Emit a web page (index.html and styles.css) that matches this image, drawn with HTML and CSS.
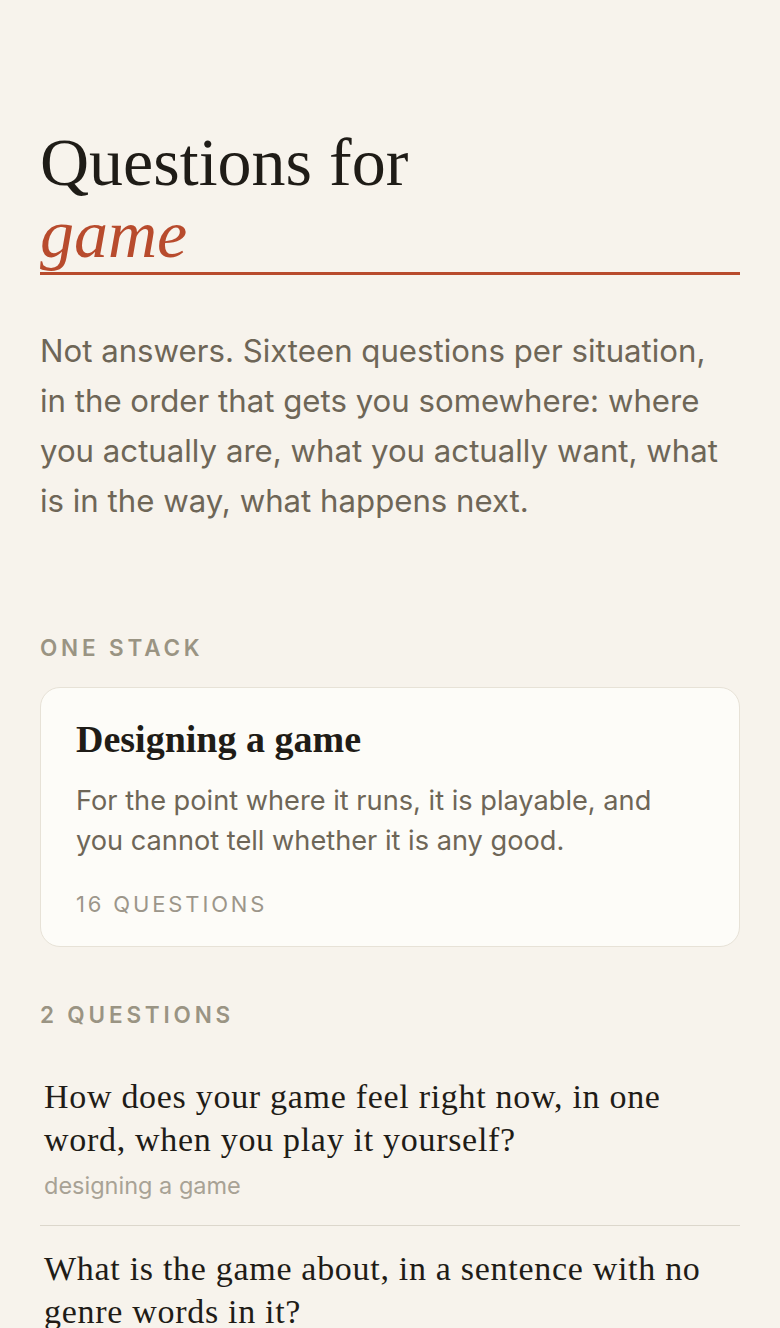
FILE: index.html
```html
<!DOCTYPE html>
<html lang="en">
<head>
<meta charset="utf-8">
<title>Questions for game</title>
<link rel="stylesheet" href="styles.css">
</head>
<body>
<main class="page">
  <h1 class="title">Questions for<br><em class="accent">game</em></h1>
  <p class="intro">Not answers. Sixteen questions per situation, in the order that gets you somewhere: where you actually are, what you actually want, what is in the way, what happens next.</p>

  <h2 class="label label-stack">One stack</h2>
  <a class="card" href="#">
    <h3 class="card-title">Designing a game</h3>
    <p class="card-desc">For the point where it runs, it is playable, and you cannot tell whether it is any good.</p>
    <div class="card-count">16 questions</div>
  </a>

  <h2 class="label label-list">2 questions</h2>
  <ul class="qlist">
    <li class="qitem">
      <p class="qtext">How does your game feel right now, in one word, when you play it yourself?</p>
      <p class="qsrc">designing a game</p>
    </li>
    <li class="qitem">
      <p class="qtext">What is the game about, in a sentence with no genre words in it?</p>
      <p class="qsrc">designing a game</p>
    </li>
  </ul>
</main>
</body>
</html>
```

FILE: styles.css
```css
html, body {
  margin: 0;
  padding: 0;
  background: #f7f3ec;
}
body {
  font-family: Inter, "Noto Sans", sans-serif;
  color: #1f1c17;
}
.page {
  padding: 126px 40px 40px;
}
.title {
  margin: 0;
  font-family: "Liberation Serif", serif;
  font-weight: 400;
  font-size: 68px;
  line-height: 72px;
  color: #1f1c17;
  padding-bottom: 2px;
  border-bottom: 3px solid #b84b2d;
}
.accent {
  font-style: italic;
  color: #b84b2d;
}
.intro {
  margin: 51px 0 0;
  font-size: 31.2px;
  line-height: 50px;
  color: #6e6657;
}
.label {
  margin: 0;
  font-size: 22.5px;
  line-height: 26px;
  font-weight: 600;
  letter-spacing: 0.17em;
  text-transform: uppercase;
  color: #9a9483;
}
.label-stack {
  margin-top: 109px;
}
.card {
  display: block;
  margin-top: 26px;
  padding: 28px 35px 29px;
  background: #fdfcf8;
  border: 1px solid #e7e2d7;
  border-radius: 20px;
  text-decoration: none;
  color: inherit;
}
.card-title {
  margin: 0;
  font-family: "Liberation Serif", serif;
  font-weight: 700;
  font-size: 38px;
  line-height: 46px;
  color: #1f1c17;
}
.card-desc {
  margin: 19px 0 0;
  font-size: 27.2px;
  line-height: 40px;
  color: #6e6657;
}
.card-count {
  margin-top: 30px;
  font-size: 22px;
  line-height: 26px;
  letter-spacing: 0.13em;
  text-transform: uppercase;
  color: #9c968a;
}
.label-list {
  margin-top: 55px;
}
.qlist {
  list-style: none;
  margin: 47px 0 0;
  padding: 0;
}
.qitem {
  padding: 0 4px 25px;
  border-bottom: 1px solid #dcd7cc;
}
.qitem + .qitem {
  padding-top: 21px;
}
.qtext {
  margin: 0;
  font-family: "Liberation Serif", serif;
  font-size: 34px;
  line-height: 43px;
  letter-spacing: 0.7px;
  color: #1f1c17;
}
.qsrc {
  margin: 11px 0 0;
  font-size: 23.5px;
  line-height: 28px;
  color: #a8a295;
}
```
